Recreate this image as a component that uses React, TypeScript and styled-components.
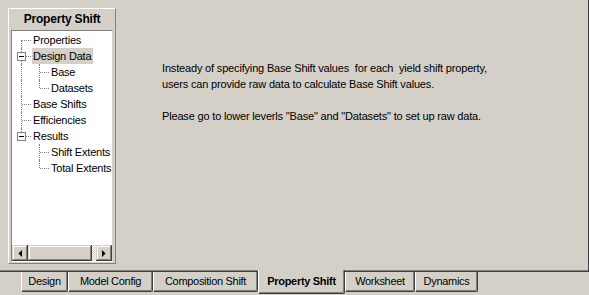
import styled, { createGlobalStyle } from "styled-components";

const GlobalStyle = createGlobalStyle`
  html, body {
    margin: 0;
    padding: 0;
    background: #d4d0c8;
  }
  body {
    font-family: "Liberation Sans", Arial, sans-serif;
    font-size: 11px;
    letter-spacing: -0.2px;
    color: #000;
  }
`;

type Line = "none" | "full" | "top" | "bottom";

type Cell = { v: Line; h?: boolean; box?: boolean };

type Node = { label: string; cells: Cell[]; selected?: boolean };

const tree: Node[] = [
  { label: "Properties", cells: [{ v: "bottom", h: true }] },
  { label: "Design Data", cells: [{ v: "full", h: true, box: true }], selected: true },
  { label: "Base", cells: [{ v: "full" }, { v: "full", h: true }] },
  { label: "Datasets", cells: [{ v: "full" }, { v: "top", h: true }] },
  { label: "Base Shifts", cells: [{ v: "full", h: true }] },
  { label: "Efficiencies", cells: [{ v: "full", h: true }] },
  { label: "Results", cells: [{ v: "top", h: true, box: true }] },
  { label: "Shift Extents", cells: [{ v: "none" }, { v: "full", h: true }] },
  { label: "Total Extents", cells: [{ v: "none" }, { v: "top", h: true }] },
];

const tabs = [
  { label: "Design", width: 47 },
  { label: "Model Config", width: 85 },
  { label: "Composition Shift", width: 105 },
  { label: "Property Shift", width: 87, active: true },
  { label: "Worksheet", width: 70 },
  { label: "Dynamics", width: 63 },
];

export default function App() {
  return (
    <>
      <GlobalStyle />
      <Window>
        <Page>
          <SidePanel>
            <PanelTitle>Property Shift</PanelTitle>
            <TreeBox>
              <TreeList>
                {tree.map((node) => (
                  <TreeRow key={node.label}>
                    {node.cells.map((c, i) => (
                      <Gutter key={i} $v={c.v} $h={!!c.h}>
                        {c.box && (
                          <Expander>
                            <Minus />
                          </Expander>
                        )}
                      </Gutter>
                    ))}
                    <NodeLabel $selected={!!node.selected}>{node.label}</NodeLabel>
                  </TreeRow>
                ))}
              </TreeList>
              <HScroll>
                <ScrollButton>
                  <svg width="4" height="7" viewBox="0 0 4 7">
                    <polygon points="4,0 4,7 0.5,3.5" fill="#000" />
                  </svg>
                </ScrollButton>
                <Thumb />
                <Track />
                <ScrollButton>
                  <svg width="4" height="7" viewBox="0 0 4 7">
                    <polygon points="0,0 0,7 3.5,3.5" fill="#000" />
                  </svg>
                </ScrollButton>
              </HScroll>
            </TreeBox>
          </SidePanel>
          <Content>
            <Message>
              {"Insteady of specifying Base Shift values  for each  yield shift property,\nusers can provide raw data to calculate Base Shift values.\n\nPlease go to lower leverls \"Base\" and \"Datasets\" to set up raw data."}
            </Message>
          </Content>
        </Page>
        <TabStrip>
          {tabs.map((t) => (
            <Tab key={t.label} $width={t.width} $active={!!t.active}>
              {t.label}
            </Tab>
          ))}
        </TabStrip>
      </Window>
    </>
  );
}

const Window = styled.div`
  width: 589px;
  height: 295px;
  display: flex;
  flex-direction: column;
  background: #d4d0c8;
  overflow: hidden;
`;

const Page = styled.div`
  box-sizing: border-box;
  height: 272px;
  display: flex;
  padding: 8px 0 0 8px;
  border-right: 1px solid #404040;
  border-bottom: 1px solid #404040;
  box-shadow: inset 0 -1px 0 #808080;
`;

const SidePanel = styled.div`
  box-sizing: border-box;
  width: 108px;
  height: 256px;
  display: flex;
  flex-direction: column;
  padding: 0 2px 1px 2px;
  border-top: 1px solid #fff;
  border-left: 1px solid #fff;
  border-right: 1px solid #808080;
  border-bottom: 1px solid #808080;
`;

const PanelTitle = styled.div`
  height: 21px;
  line-height: 21px;
  text-align: center;
  font-weight: bold;
  font-size: 12px;
`;

const TreeBox = styled.div`
  flex: 1;
  display: flex;
  flex-direction: column;
  background: #fff;
  border-top: 1px solid #808080;
  border-left: 1px solid #808080;
  border-right: 1px solid #d4d0c8;
  border-bottom: 1px solid #fff;
  overflow: hidden;
`;

const TreeList = styled.div`
  flex: 1;
  padding-top: 1px;
  overflow: hidden;
`;

const TreeRow = styled.div`
  display: flex;
  height: 16px;
  white-space: nowrap;
`;

const Gutter = styled.div<{ $v: Line; $h: boolean }>`
  position: relative;
  flex: none;
  width: 18px;
  height: 16px;

  &::before {
    content: "";
    display: ${(p) => (p.$v === "none" ? "none" : "block")};
    position: absolute;
    left: 9px;
    top: ${(p) => (p.$v === "bottom" ? "8px" : "0")};
    bottom: ${(p) => (p.$v === "top" ? "8px" : "0")};
    border-left: 1px dotted #808080;
  }

  &::after {
    content: "";
    display: ${(p) => (p.$h ? "block" : "none")};
    position: absolute;
    left: 10px;
    top: 8px;
    width: 9px;
    border-top: 1px dotted #808080;
  }
`;

const Expander = styled.span`
  position: absolute;
  z-index: 1;
  left: 5px;
  top: 4px;
  box-sizing: border-box;
  width: 9px;
  height: 9px;
  background: #fff;
  border: 1px solid #808080;
  display: flex;
  align-items: center;
  justify-content: center;
`;

const Minus = styled.span`
  width: 5px;
  height: 1px;
  background: #000;
`;

const NodeLabel = styled.span<{ $selected: boolean }>`
  margin-left: 2px;
  padding: 0 2px 0 1px;
  height: 16px;
  line-height: 16px;
  background: ${(p) => (p.$selected ? "#d4d0c8" : "transparent")};
`;

const HScroll = styled.div`
  display: flex;
  height: 16px;
  flex: none;
`;

const raised = `
  box-sizing: border-box;
  background: #d4d0c8;
  box-shadow: inset -1px -1px #404040, inset 1px 1px #d4d0c8,
    inset -2px -2px #808080, inset 2px 2px #fff;
`;

const ScrollButton = styled.div`
  ${raised}
  width: 16px;
  height: 16px;
  display: flex;
  align-items: center;
  justify-content: center;
`;

const Thumb = styled.div`
  ${raised}
  width: 64px;
  height: 16px;
`;

const Track = styled.div`
  flex: 1;
  background-color: #fff;
  background-image: repeating-conic-gradient(#d4d0c8 0 25%, #fff 0 50%);
  background-size: 2px 2px;
`;

const Content = styled.div`
  padding: 52px 0 0 46px;
`;

const Message = styled.div`
  white-space: pre;
  font-size: 11px;
  letter-spacing: -0.17px;
  line-height: 16px;
`;

const TabStrip = styled.div`
  display: flex;
  align-items: flex-start;
  padding-left: 21px;
`;

const Tab = styled.div<{ $width: number; $active: boolean }>`
  position: relative;
  box-sizing: border-box;
  width: ${(p) => p.$width}px;
  height: ${(p) => (p.$active ? 24 : 20)}px;
  margin-top: ${(p) => (p.$active ? -2 : 0)}px;
  padding-bottom: ${(p) => (p.$active ? 1 : 2)}px;
  display: flex;
  align-items: center;
  justify-content: center;
  background: #d4d0c8;
  font-weight: ${(p) => (p.$active ? "bold" : "normal")};
  font-size: 11px;
  letter-spacing: -0.3px;
  border-left: 1px solid #fff;
  border-right: 1px solid #404040;
  border-bottom: 1px solid #404040;
  border-bottom-right-radius: 2px;
  box-shadow: inset -1px -1px 0 #808080;
  z-index: ${(p) => (p.$active ? 1 : 0)};
`;
